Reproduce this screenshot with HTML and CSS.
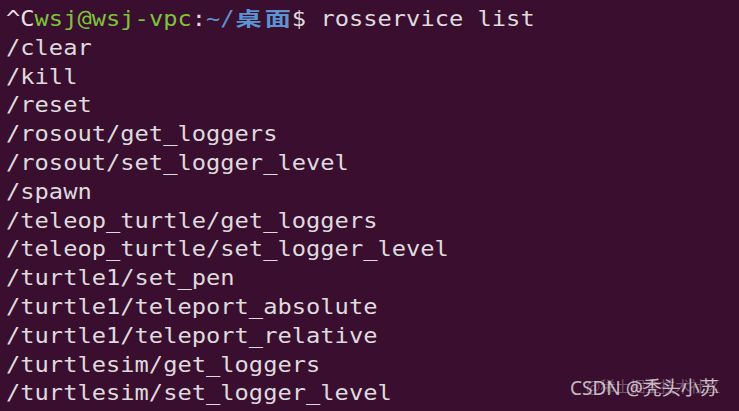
FILE: index.html
```html
<!DOCTYPE html>
<html>
<head>
<meta charset="utf-8">
<link rel="stylesheet" href="styles.css">
</head>
<body>
<div class="term">
  <div class="lines">
    <div class="line"><span class="ctl">^C</span><span class="user">wsj@wsj-vpc</span>:<span class="path">~/<span class="wide">桌</span><span class="wide">面</span></span>$ rosservice list</div>
    <div class="line">/clear</div>
    <div class="line">/kill</div>
    <div class="line">/reset</div>
    <div class="line">/rosout/get_loggers</div>
    <div class="line">/rosout/set_logger_level</div>
    <div class="line">/spawn</div>
    <div class="line">/teleop_turtle/get_loggers</div>
    <div class="line">/teleop_turtle/set_logger_level</div>
    <div class="line">/turtle1/set_pen</div>
    <div class="line">/turtle1/teleport_absolute</div>
    <div class="line">/turtle1/teleport_relative</div>
    <div class="line">/turtlesim/get_loggers</div>
    <div class="line">/turtlesim/set_logger_level</div>
    <div class="line"><span class="user">wsj@wsj-vpc</span>:<span class="path">~/<span class="wide">桌</span><span class="wide">面</span></span>$ </div>
  </div>
  <div class="wm-back">@稀土掘金技术社区</div>
  <div class="wm-front">CSDN @秃头小苏</div>
</div>
</body>
</html>
```

FILE: styles.css
```css
html, body {
  margin: 0;
  padding: 0;
  background: #3a0e2e;
  overflow: hidden;
}
.term {
  position: relative;
  width: 739px;
  height: 411px;
  overflow: hidden;
  background: #3a0e2e;
  padding: 5px 0 0 6px;
  box-sizing: border-box;
}
.lines {
  font-family: "DejaVu Sans Mono", monospace;
  font-size: 21px;
  line-height: 28.8px;
  color: #dedade;
  transform: scaleX(1.13);
  transform-origin: 0 0;
}
.line {
  height: 28.8px;
  white-space: pre;
}
.ctl {
  color: #e6dfe6;
}
.user {
  color: #7cc43a;
}
.path {
  color: #5c93d0;
}
.wide {
  display: inline-block;
  width: 25.3px;
  text-align: center;
  font-family: "Noto Sans CJK SC", "DejaVu Sans Mono", sans-serif;
  font-size: 19px;
  font-weight: 700;
  line-height: 20px;
  vertical-align: baseline;
  transform: scaleX(1.22);
  transform-origin: 50% 50%;
}
.wm-back {
  position: absolute;
  left: 586px;
  top: 375px;
  font-family: "Noto Sans CJK SC", "Noto Sans", sans-serif;
  font-size: 15px;
  color: rgba(205, 195, 205, 0.4);
  white-space: nowrap;
}
.wm-front {
  position: absolute;
  left: 570px;
  top: 376px;
  font-family: "Noto Sans", "Noto Sans CJK SC", sans-serif;
  font-size: 19px;
  line-height: 25px;
  color: rgba(235, 230, 235, 0.8);
  white-space: nowrap;
}
```
